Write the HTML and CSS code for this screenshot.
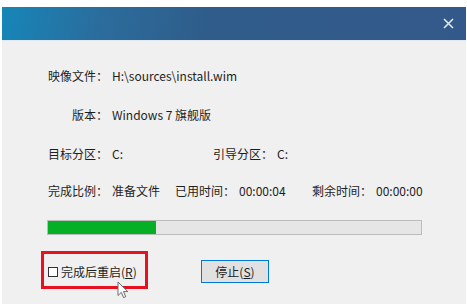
FILE: index.html
```html
<!DOCTYPE html>
<html lang="zh-CN">
<head>
<meta charset="utf-8">
<title>安装</title>
<link rel="stylesheet" href="styles.css">
</head>
<body>
<div class="dialog">
  <div class="titlebar">
    <svg class="close" width="11" height="11" viewBox="0 0 11 11"><path d="M1 1L10 10M10 1L1 10" stroke="#dbe8f5" stroke-width="1.6" fill="none"/></svg>
  </div>
  <div class="content">
    <div class="row"><span class="label">映像文件：</span><span class="value">H:\sources\install.wim</span></div>
    <div class="row"><span class="label">版本：</span><span class="value">Windows 7 旗舰版</span></div>
    <div class="row"><span class="label">目标分区：</span><span class="value w-drive">C:</span><span class="label">引导分区：</span><span class="value">C:</span></div>
    <div class="row"><span class="label">完成比例：</span><span class="value w-stage">准备文件</span><span class="label">已用时间：</span><span class="value w-time">00:00:04</span><span class="label">剩余时间：</span><span class="value">00:00:00</span></div>
    <div class="progress"><div class="bar" style="width:29%"></div></div>
    <div class="footer">
      <label class="check"><span class="box"></span><span class="check-text">完成后重启(<u>R</u>)</span></label>
      <button class="btn">停止(<u>S</u>)</button>
    </div>
  </div>
  <div class="highlight"></div>
  <svg class="cursor" width="13" height="18" viewBox="0 0 13 18"><path d="M1 1L1 14.5L4.3 11.4L6.6 16.6L8.7 15.7L6.5 10.6L10.8 10.6Z" fill="#fff" stroke="#6a6a6a" stroke-width="1" stroke-linejoin="round"/></svg>
</div>
</body>
</html>
```
FILE: styles.css
```css
html, body {
  margin: 0;
  padding: 0;
  background: #fff;
}
body {
  font-family: "Noto Sans CJK SC", "Microsoft YaHei", sans-serif;
  font-size: 12px;
  color: #1e1e1e;
}
.dialog {
  position: relative;
  margin: 7px 1px 0 2px;
  height: 297px;
  background: #f0f0f0;
  display: flex;
  flex-direction: column;
  overflow: hidden;
}
.titlebar {
  height: 33px;
  flex: none;
  background: linear-gradient(100deg, #1686b8 0%, #2b6c9c 22%, #2f5c8a 45%, #33598a 100%);
  border-bottom: 1px solid #e2e9f1;
  display: flex;
  align-items: center;
  justify-content: flex-end;
  padding-right: 12px;
}
.close { display: block; }
.content {
  padding: 26px 0 0 46px;
  display: flex;
  flex-direction: column;
}
.row {
  display: flex;
  height: 17px;
  line-height: 17px;
  margin-bottom: 22px;
  white-space: nowrap;
}
.row:nth-child(3) { margin-bottom: 20px; }
.row:nth-child(4) { margin-bottom: 0; }
.label {
  width: 60px;
  text-align: right;
  margin-right: 4px;
  flex: none;
}
.value { flex: none; }
.w-drive { width: 101px; }
.w-stage { width: 63px; }
.w-time { width: 73px; }
.progress {
  margin-top: 21px;
  margin-left: -1px;
  width: 375px;
  height: 15px;
  box-sizing: border-box;
  border: 1px solid #bcbcbc;
  background: #e6e6e6;
}
.bar {
  height: 100%;
  background: #06b025;
}
.footer {
  margin-top: 25px;
  height: 23px;
  display: flex;
  align-items: center;
}
.check {
  width: 153px;
  display: flex;
  align-items: center;
  flex: none;
}
.box {
  width: 10px;
  height: 10px;
  box-sizing: border-box;
  border: 1px solid #333;
  background: #fff;
  margin-right: 3px;
}
.check-text { line-height: 17px; }
.btn {
  width: 68px;
  height: 23px;
  box-sizing: border-box;
  border: 1px solid #0078d7;
  background: #e1e1e1;
  font: inherit;
  color: inherit;
  padding: 0;
  line-height: 19px;
}
.highlight {
  position: absolute;
  left: 39px;
  top: 244px;
  width: 107px;
  height: 38px;
  box-sizing: border-box;
  border: 3px solid #e8111f;
}
.cursor {
  position: absolute;
  left: 115px;
  top: 274px;
}
```
